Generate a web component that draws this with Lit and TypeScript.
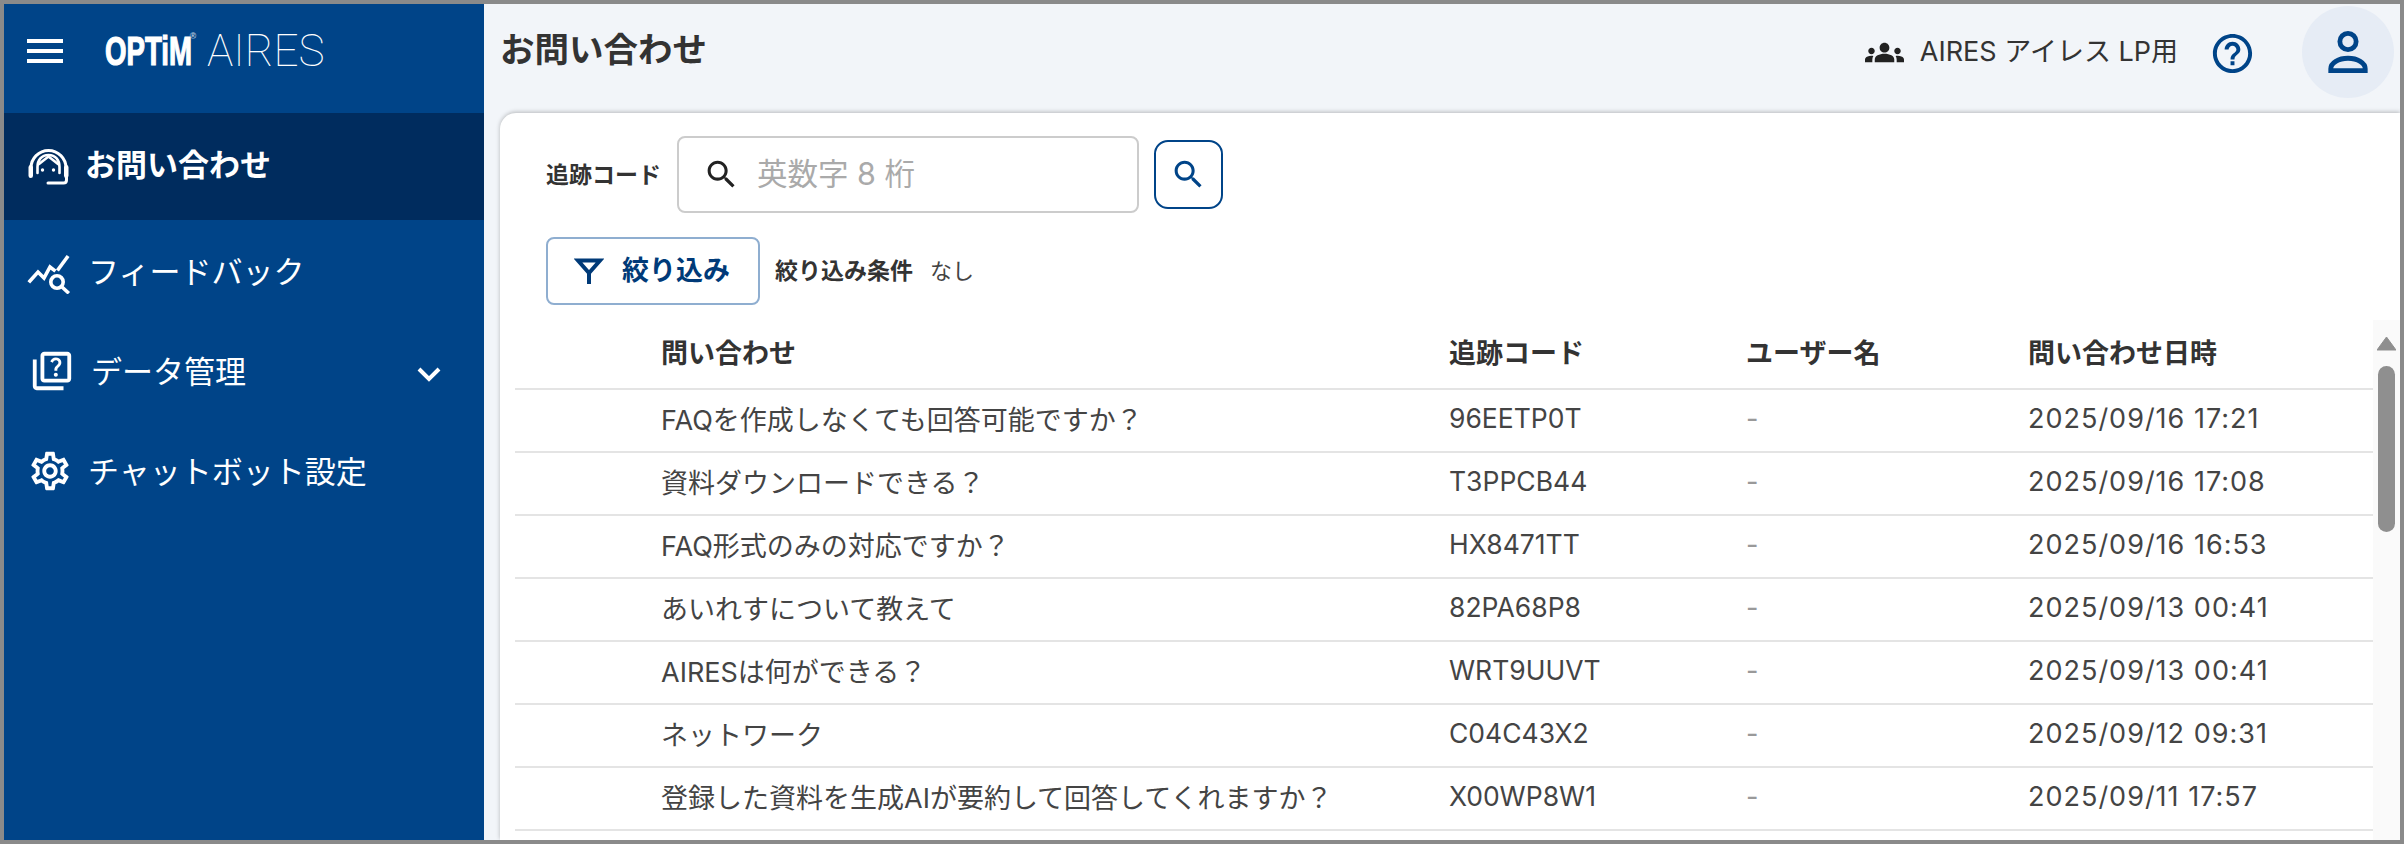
import { LitElement, html, css } from "lit";
import { customElement } from "lit/decorators.js";

const rows = [
  ["FAQを作成しなくても回答可能ですか？", "96EETP0T", "-", "2025/09/16 17:21"],
  ["資料ダウンロードできる？", "T3PPCB44", "-", "2025/09/16 17:08"],
  ["FAQ形式のみの対応ですか？", "HX8471TT", "-", "2025/09/16 16:53"],
  ["あいれすについて教えて", "82PA68P8", "-", "2025/09/13 00:41"],
  ["AIRESは何ができる？", "WRT9UUVT", "-", "2025/09/13 00:41"],
  ["ネットワーク", "C04C43X2", "-", "2025/09/12 09:31"],
  ["登録した資料を生成AIが要約して回答してくれますか？", "X00WP8W1", "-", "2025/09/11 17:57"],
];

const searchPath = "M15.5 14h-.79l-.28-.27C15.41 12.59 16 11.11 16 9.5 16 5.91 13.09 3 9.5 3S3 5.91 3 9.5 5.91 16 9.5 16c1.61 0 3.09-.59 4.23-1.57l.27.28v.79l5 4.99L20.49 19l-4.99-5zm-6 0C7.01 14 5 11.99 5 9.5S7.01 5 9.5 5 14 7.01 14 9.5 11.99 14 9.5 14z";
const groupPath = "M12 12.75c1.63 0 3.07.39 4.24.9 1.08.48 1.76 1.56 1.76 2.73V18H6v-1.61c0-1.18.68-2.26 1.76-2.73 1.17-.52 2.61-.91 4.24-.91zM4 13c1.1 0 2-.9 2-2s-.9-2-2-2-2 .9-2 2 .9 2 2 2zm1.13 1.1c-.37-.06-.74-.1-1.13-.1-.99 0-1.93.21-2.78.58C.48 14.9 0 15.62 0 16.43V18h4.5v-1.61c0-.83.23-1.61.63-2.29zM20 13c1.1 0 2-.9 2-2s-.9-2-2-2-2 .9-2 2 .9 2 2 2zm4 3.43c0-.81-.48-1.53-1.22-1.85-.85-.37-1.79-.58-2.78-.58-.39 0-.76.04-1.13.1.4.68.63 1.46.63 2.29V18H24v-1.57zM12 6c1.66 0 3 1.34 3 3s-1.34 3-3 3-3-1.34-3-3 1.34-3 3-3z";
const helpPath = "M11 18h2v-2h-2v2zm1-16C6.48 2 2 6.48 2 12s4.48 10 10 10 10-4.48 10-10S17.52 2 12 2zm0 18c-4.41 0-8-3.59-8-8s3.59-8 8-8 8 3.59 8 8-3.59 8-8 8zm0-14c-2.21 0-4 1.79-4 4h2c0-1.1.9-2 2-2s2 .9 2 2c0 2-3 1.75-3 5h2c0-2.25 3-2.5 3-5 0-2.21-1.79-4-4-4z";
const quizPath = "M4,6H2v14c0,1.1,0.9,2,2,2h14v-2H4V6z M20,2H8C6.9,2,6,2.9,6,4v12c0,1.1,0.9,2,2,2h12c1.1,0,2-0.9,2-2V4C22,2.9,21.1,2,20,2z M20,16H8V4h12V16z M13.51,10.16c0.41-0.73,1.18-1.16,1.63-1.8c0.48-0.68,0.21-1.94-1.14-1.94c-0.88,0-1.32,0.67-1.5,1.23l-1.37-0.57C11.51,5.96,12.52,5,13.99,5c1.23,0,2.08,0.56,2.51,1.26c0.37,0.6,0.58,1.73,0.01,2.57c-0.63,0.93-1.23,1.21-1.56,1.81c-0.13,0.24-0.18,0.4-0.18,1.18h-1.52C13.26,11.41,13.19,10.74,13.51,10.16z M12.95,13.95c0-0.59,0.47-1.04,1.05-1.04c0.59,0,1.04,0.45,1.04,1.04c0,0.58-0.44,1.05-1.04,1.05C13.42,15,12.95,14.53,12.95,13.95z";
const gearPath = "M19.43 12.98c.04-.32.07-.64.07-.98 0-.34-.03-.66-.07-.98l2.11-1.65c.19-.15.24-.42.12-.64l-2-3.46c-.09-.16-.26-.25-.44-.25-.06 0-.12.01-.17.03l-2.49 1c-.52-.4-1.08-.73-1.69-.98l-.38-2.65C14.46 2.18 14.25 2 14 2h-4c-.25 0-.46.18-.49.42l-.38 2.65c-.61.25-1.17.59-1.69.98l-2.49-1c-.06-.02-.12-.03-.18-.03-.17 0-.34.09-.43.25l-2 3.46c-.13.22-.07.49.12.64l2.11 1.65c-.04.32-.07.65-.07.98 0 .33.03.66.07.98l-2.11 1.65c-.19.15-.24.42-.12.64l2 3.46c.09.16.26.25.44.25.06 0 .12-.01.17-.03l2.49-1c.52.4 1.08.73 1.69.98l.38 2.65c.03.24.24.42.49.42h4c.25 0 .46-.18.49-.42l.38-2.65c.61-.25 1.17-.59 1.69-.98l2.49 1c.06.02.12.03.18.03.17 0 .34-.09.43-.25l2-3.46c.12-.22.07-.49-.12-.64l-2.11-1.65zm-1.98-1.71c.04.31.05.52.05.73 0 .21-.02.43-.05.73l-.14 1.13.89.7 1.08.84-.7 1.21-1.27-.51-1.04-.42-.9.68c-.43.32-.84.56-1.25.73l-1.06.43-.16 1.13-.2 1.35h-1.4l-.19-1.35-.16-1.13-1.06-.43c-.43-.18-.83-.41-1.23-.71l-.91-.7-1.06.43-1.27.51-.7-1.21 1.08-.84.89-.7-.14-1.13c-.03-.31-.05-.54-.05-.74s.02-.43.05-.73l.14-1.13-.89-.7-1.08-.84.7-1.21 1.27.51 1.04.42.9-.68c.43-.32.84-.56 1.25-.73l1.06-.43.16-1.13.2-1.35h1.39l.19 1.35.16 1.13 1.06.43c.43.18.83.41 1.23.71l.91.7 1.06-.43 1.27-.51.7 1.21-1.07.85-.89.7.14 1.13zM12 8c-2.21 0-4 1.79-4 4s1.79 4 4 4 4-1.79 4-4-1.79-4-4-4zm0 6c-1.1 0-2-.9-2-2s.9-2 2-2 2 .9 2 2-.9 2-2 2z";

const icon = (size: number, d: string) => html`<svg width=${size} height=${size} viewBox="0 0 24 24" fill="currentColor"><path d=${d}></path></svg>`;

const headset = html`<svg width="46" height="46" viewBox="0 0 46 46" fill="none" stroke="currentColor" stroke-width="3" stroke-linecap="round" stroke-linejoin="round">
  <path d="M6 24a17.500 17.500 0 0 1 35 0"></path>
  <path d="M12.500 29v-6c0-7 4-12 11-12s11 5 11 12v6" stroke-width="2.600"></path>
  <path d="M14 20l9.500-7.500L33 20" stroke-width="2.600"></path>
  <rect x="4.500" y="22" width="2.500" height="11" rx="1.200" fill="currentColor" stroke-width="2"></rect>
  <rect x="40" y="22" width="2.500" height="11" rx="1.200" fill="currentColor" stroke-width="2"></rect>
  <path d="M41.500 33v3c0 2-1 3-3 3H23"></path>
  <circle cx="17.500" cy="26" r="1.700" fill="currentColor" stroke="none"></circle>
  <circle cx="28.500" cy="26" r="1.700" fill="currentColor" stroke="none"></circle>
</svg>`;

const feedback = html`<svg width="46" height="46" viewBox="0 0 46 46" fill="none" stroke="currentColor" stroke-width="3.600" stroke-linecap="square" stroke-linejoin="miter">
  <path d="M5 33l8-9 6 6 6-11 4 3"></path>
  <path d="M33.500 21L42 9.500"></path>
  <circle cx="32" cy="34" r="6.200"></circle>
  <path d="M37 39l5.500 5"></path>
</svg>`;

const person = html`<svg width="46" height="46" viewBox="0 0 48 48" fill="none" stroke="currentColor" stroke-width="5">
  <circle cx="24" cy="13" r="8.500"></circle>
  <path d="M6 43.500v-2c0-6 8-11 18-11s18 5 18 11v2z"></path>
</svg>`;

const filter = html`<svg width="30" height="30" viewBox="0 0 30 30" fill="none" stroke="currentColor" stroke-width="4" stroke-linejoin="miter">
  <path d="M4 4.500h22L15 17zM15 15v13"></path>
</svg>`;

const chevron = html`<svg width="24" height="16" viewBox="0 0 24 16" fill="none" stroke="currentColor" stroke-width="4"><path d="M2 3l10 10L22 3"></path></svg>`;

@customElement("app-root")
export class AppRoot extends LitElement {
  static styles = css`
    :host {
      display: block;
      width: 2404px;
      height: 844px;
      box-sizing: border-box;
      border: 4px solid #8a8a8a;
      font-family: Inter, "Noto Sans CJK JP", sans-serif;
      color: #333;
      overflow: hidden;
      background: #f2f5f9;
    }
    .app { display: flex; height: 100%; }
    .side { width: 480px; flex: none; background: #004488; color: #fff; display: flex; flex-direction: column; }
    .brand { height: 109px; display: flex; align-items: center; padding: 0 0 16px 23px; box-sizing: border-box; }
    .burger { width: 36px; display: flex; flex-direction: column; gap: 6px; }
    .burger i { display: block; height: 4px; background: #fff; }
    .logo { margin-left: 42px; width: 85px; flex: none; display: block; white-space: nowrap; font: 700 40px/1 "Liberation Sans", sans-serif; -webkit-text-stroke: 1.2px #fff; transform: scaleX(0.69); transform-origin: left center; position: relative; }
    .reg { font-size: 9px; -webkit-text-stroke: 0; position: absolute; left: 124px; top: 1px; color: #b9c9dd; transform: scaleX(1.4); }
    .aires { margin-left: 17px; font: 100 44px/1 Roboto, sans-serif; }
    .nav { height: 100px; display: flex; align-items: center; font-size: 31px; padding-left: 21px; }
    .nav .ic { width: 46px; height: 46px; flex: none; }
    .nav .lbl { margin-left: 17px; flex: 1; padding-bottom: 4px; }
    .nav.active { height: 107px; background: #002c5e; font-weight: 700; margin-bottom: 1px; padding-left: 21px; }
    .nav.active .lbl { margin-left: 14px; padding-bottom: 8px; }
    .nav.data { padding-left: 25px; }
    .nav.data .lbl { margin-left: 16px; }
    .nav.gear { padding-left: 23px; }
    .nav.gear .lbl { margin-left: 15px; }
    .chev { margin-right: 43px; margin-top: 6px; display: flex; }
    .main { flex: 1; min-width: 0; display: flex; flex-direction: column; }
    .top { height: 109px; flex: none; display: flex; align-items: center; padding: 0 6px 10px 16px; box-sizing: border-box; }
    .title { font-size: 34.500px; font-weight: 700; flex: 1; color: #333; margin-bottom: 14px; }
    .tenant { display: flex; align-items: center; gap: 16px; font-size: 27px; color: #333; }
    .tenant span { padding-bottom: 8px; }
    .tenant svg { color: #222; display: block; margin-top: -2px; }
    .help { color: #004488; margin-left: 31px; display: flex; }
    .avatar { width: 92px; height: 92px; border-radius: 50%; background: #e6ecf5; color: #004488; margin-left: 46px; display: flex; align-items: center; justify-content: center; margin-top: -4px; }
    .card { flex: 1; min-height: 0; margin-left: 16px; background: #fff; border-top-left-radius: 16px; box-shadow: 0 -1px 4px rgba(0,0,0,.25); display: flex; flex-direction: column; overflow: hidden; padding: 23px 0 0 15px; }
    .search { display: flex; align-items: center; padding-left: 31px; }
    .label { font-size: 23px; font-weight: 700; color: #333; padding-bottom: 4px; }
    .input { width: 462px; height: 77px; box-sizing: border-box; border: 2px solid #ccc; border-radius: 8px; margin-left: 16px; display: flex; align-items: center; padding-left: 24px; color: #222; gap: 17px; }
    .ph { color: #aaa; font-size: 30.500px; padding-bottom: 5px; }
    .sbtn { width: 69px; height: 69px; box-sizing: border-box; border: 2px solid #004488; border-radius: 14px; margin-left: 15px; color: #004488; background: #fff; display: flex; align-items: center; justify-content: center; padding: 0; }
    .cond { display: flex; align-items: center; padding-left: 31px; margin-top: 24px; }
    .fbtn { width: 214px; height: 68px; box-sizing: border-box; border: 2px solid #8faed0; border-radius: 8px; background: #fff; color: #003a78; display: flex; align-items: center; padding: 0 0 0 26px; gap: 18px; font: 700 27px Inter, "Noto Sans CJK JP", sans-serif; }
    .fbtn svg { flex: none; }
    .fbtn span { padding-bottom: 6px; }
    .cond .label { margin-left: 15px; }
    .none { font-size: 22px; margin-left: 17px; color: #444; padding-bottom: 4px; }
    .body { display: flex; flex: 1; min-height: 0; margin-top: 15px; overflow: hidden; }
    table { border-collapse: collapse; table-layout: fixed; width: 1858px; flex: none; align-self: flex-start; }
    th { height: 69px; text-align: left; font-size: 27px; font-weight: 700; color: #333; padding: 0 0 6px; border-bottom: 2px solid #e4e4e4; box-sizing: border-box; }
    td { height: 63px; padding: 0 0 5px; font-size: 27px; color: #444; border-bottom: 2px solid #e4e4e4; box-sizing: border-box; white-space: nowrap; }
    td.code { font-size: 26.500px; }
    td.dash { color: #999; }
    td.date { letter-spacing: 1px; }
    .sb { width: 27px; flex: none; background: #fafafa; display: flex; flex-direction: column; align-items: center; padding-top: 17px; box-sizing: border-box; }
    .sb svg { display: block; }
    .thumb { width: 17px; height: 166px; background: #8f8f8f; border-radius: 9px; margin-top: 15px; }
  `;

  render() {
    return html`<div class="app">
      <aside class="side">
        <div class="brand">
          <div class="burger"><i></i><i></i><i></i></div>
          <span class="logo">OPTiM<span class="reg">®</span></span>
          <span class="aires">AIRES</span>
        </div>
        <div class="nav active"><span class="ic">${headset}</span><span class="lbl">お問い合わせ</span></div>
        <div class="nav"><span class="ic">${feedback}</span><span class="lbl">フィードバック</span></div>
        <div class="nav data"><span class="ic">${icon(46, quizPath)}</span><span class="lbl">データ管理</span><span class="chev">${chevron}</span></div>
        <div class="nav gear"><span class="ic">${icon(46, gearPath)}</span><span class="lbl">チャットボット設定</span></div>
      </aside>
      <div class="main">
        <header class="top">
          <div class="title">お問い合わせ</div>
          <div class="tenant">${icon(39, groupPath)}<span>AIRES アイレス LP用</span></div>
          <div class="help">${icon(47, helpPath)}</div>
          <div class="avatar">${person}</div>
        </header>
        <section class="card">
          <div class="search">
            <span class="label">追跡コード</span>
            <div class="input">${icon(37, searchPath)}<span class="ph">英数字 8 桁</span></div>
            <button class="sbtn">${icon(37, searchPath)}</button>
          </div>
          <div class="cond">
            <button class="fbtn">${filter}<span>絞り込み</span></button>
            <span class="label">絞り込み条件</span>
            <span class="none">なし</span>
          </div>
          <div class="body">
            <table>
              <colgroup><col style="width:146px" /><col style="width:788px" /><col style="width:297px" /><col style="width:282px" /><col style="width:345px" /></colgroup>
              <thead><tr><th></th><th>問い合わせ</th><th>追跡コード</th><th>ユーザー名</th><th>問い合わせ日時</th></tr></thead>
              <tbody>
                ${rows.map((r) => html`<tr><td></td><td>${r[0]}</td><td class="code">${r[1]}</td><td class="dash">${r[2]}</td><td class="date">${r[3]}</td></tr>`)}
              </tbody>
            </table>
            <div class="sb">
              <svg width="19" height="14" viewBox="0 0 19 14"><path d="M9.500 0L19 13H0z" fill="#8f8f8f" stroke="#8f8f8f" stroke-linejoin="round"></path></svg>
              <div class="thumb"></div>
            </div>
          </div>
        </section>
      </div>
    </div>`;
  }
}
